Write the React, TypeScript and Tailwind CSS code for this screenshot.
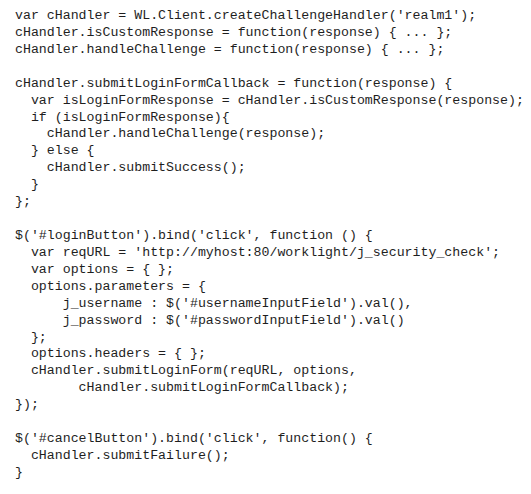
import React from 'react';

const code = `var cHandler = WL.Client.createChallengeHandler('realm1');
cHandler.isCustomResponse = function(response) { ... };
cHandler.handleChallenge = function(response) { ... };

cHandler.submitLoginFormCallback = function(response) {
  var isLoginFormResponse = cHandler.isCustomResponse(response);
  if (isLoginFormResponse){
    cHandler.handleChallenge(response);
  } else {
    cHandler.submitSuccess();
  }
};

$('#loginButton').bind('click', function () {
  var reqURL = 'http://myhost:80/worklight/j_security_check';
  var options = { };
  options.parameters = {
      j_username : $('#usernameInputField').val(),
      j_password : $('#passwordInputField').val()
  };
  options.headers = { };
  cHandler.submitLoginForm(reqURL, options,
        cHandler.submitLoginFormCallback);
});

$('#cancelButton').bind('click', function() {
  cHandler.submitFailure();
}`;

const App: React.FC = () => {
  return (
    <div className="w-[531px] h-[494px] bg-white overflow-hidden">
      <pre className="pl-[15px] pt-[8px] m-0 whitespace-pre text-[13.25px] leading-[16.92px] text-[#1e1e1e] font-['Liberation_Mono',monospace]">
        {code}
      </pre>
    </div>
  );
};

export default App;
